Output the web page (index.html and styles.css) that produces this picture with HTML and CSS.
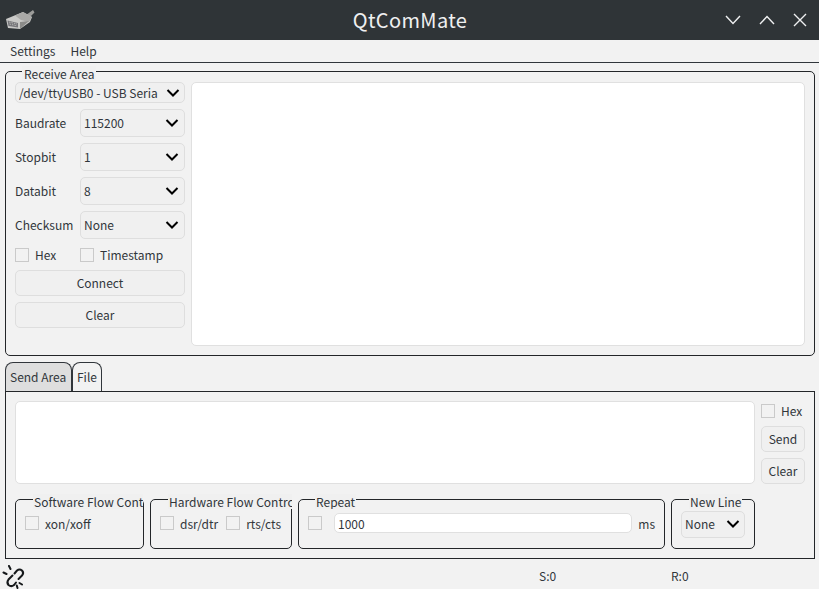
FILE: index.html
```html
<!DOCTYPE html>
<html lang="en">
<head>
<meta charset="utf-8">
<title>QtComMate</title>
<link rel="stylesheet" href="styles.css">
</head>
<body>
<div class="app">
  <header class="titlebar">
    <svg class="app-icon" width="32" height="24" viewBox="0 0 32 24">
      <path d="M21 7 L28 2 L29.5 4.5 L24 10 Z" fill="#9c9c9a"/>
      <path d="M1 11 L18 4 L27 9 L25 14 L15 21 L3 20 Z" fill="#c9c9c7"/>
      <path d="M10 7.5 L18 4 L27 9 L24 14 L16 12 Z" fill="#a9a9a7"/>
      <path d="M15 14 L24 13 L15 21 Z" fill="#8a8a88"/>
      <path d="M2.5 12.5 L13 15 L13 19.5 L3.5 18 Z" fill="#76767a"/>
      <path d="M4 14 L12 16 M4.5 16 L12 17.8" stroke="#b4b4b2" stroke-width="1" stroke-dasharray="1.5 1" fill="none"/>
    </svg>
    <div class="title">QtComMate</div>
    <div class="win-buttons">
      <svg width="16" height="10" viewBox="0 0 16 10"><path d="M1 1 L8 8.5 L15 1" class="win-stroke"/></svg>
      <svg width="16" height="10" viewBox="0 0 16 10"><path d="M1 9 L8 1.5 L15 9" class="win-stroke"/></svg>
      <svg width="14" height="14" viewBox="0 0 14 14"><path d="M1 1 L13 13 M13 1 L1 13" class="win-stroke"/></svg>
    </div>
  </header>

  <nav class="menubar"><span>Settings</span><span>Help</span></nav>

  <section class="group receive">
    <div class="legend receive-legend">Receive Area</div>
    <div class="side">
      <div class="combo port"><span class="clip">/dev/ttyUSB0 - USB Serial</span><svg class="chev" width="14" height="8" viewBox="0 0 14 8"><path d="M1.5 1 L7 6.5 L12.5 1"/></svg></div>
      <div class="field"><label>Baudrate</label><div class="combo"><span>115200</span><svg class="chev" width="14" height="8" viewBox="0 0 14 8"><path d="M1.5 1 L7 6.5 L12.5 1"/></svg></div></div>
      <div class="field"><label>Stopbit</label><div class="combo"><span>1</span><svg class="chev" width="14" height="8" viewBox="0 0 14 8"><path d="M1.5 1 L7 6.5 L12.5 1"/></svg></div></div>
      <div class="field"><label>Databit</label><div class="combo"><span>8</span><svg class="chev" width="14" height="8" viewBox="0 0 14 8"><path d="M1.5 1 L7 6.5 L12.5 1"/></svg></div></div>
      <div class="field"><label>Checksum</label><div class="combo"><span>None</span><svg class="chev" width="14" height="8" viewBox="0 0 14 8"><path d="M1.5 1 L7 6.5 L12.5 1"/></svg></div></div>
      <div class="check-row">
        <div class="check hex-check"><i class="box"></i>Hex</div>
        <div class="check"><i class="box"></i>Timestamp</div>
      </div>
      <div class="btn wide">Connect</div>
      <div class="btn wide">Clear</div>
    </div>
    <div class="textbox receive-text"></div>
  </section>

  <div class="tabs">
    <div class="tab active">Send Area</div>
    <div class="tab">File</div>
  </div>

  <section class="pane">
    <div class="send-top">
      <div class="textbox send-text"></div>
      <div class="send-side">
        <div class="check"><i class="box"></i>Hex</div>
        <div class="btn small">Send</div>
        <div class="btn small">Clear</div>
      </div>
    </div>
    <div class="options">
      <div class="group opt g-soft">
        <div class="legend soft-legend">Software Flow Cont</div>
        <div class="check"><i class="box"></i>xon/xoff</div>
      </div>
      <div class="group opt g-hard">
        <div class="legend hard-legend">Hardware Flow Contrc</div>
        <div class="check"><i class="box"></i>dsr/dtr</div>
        <div class="check"><i class="box"></i>rts/cts</div>
      </div>
      <div class="group opt g-repeat">
        <div class="legend repeat-legend">Repeat</div>
        <i class="box"></i>
        <div class="textbox repeat-input">1000</div>
        <span>ms</span>
      </div>
      <div class="group opt g-newline">
        <div class="legend newline-legend">New Line</div>
        <div class="combo newline-combo"><span>None</span><svg class="chev" width="14" height="8" viewBox="0 0 14 8"><path d="M1.5 1 L7 6.5 L12.5 1"/></svg></div>
      </div>
    </div>
  </section>

  <footer class="statusbar">
    <svg class="link-icon" width="24" height="24" viewBox="0 0 24 24">
      <path d="M12.5 8.5 L15 5.5 Q17.5 3.5 20 5.5 Q22.3 8 20 10.5 L16.5 14" class="link-stroke"/>
      <path d="M10.5 10.5 L6.5 14.5 Q4.3 17.5 6.5 20 Q9.3 22.3 12 20 L14 17.5" class="link-stroke"/>
      <path d="M7 1 L8.5 4 M1.5 7.5 L4.5 9 M20 19.5 L17.5 18 M15.5 23 L14.8 20.5" class="link-stroke"/>
    </svg>
    <span class="stat-s">S:0</span>
    <span class="stat-r">R:0</span>
  </footer>
</div>
</body>
</html>
```

FILE: styles.css
```css
* { box-sizing: border-box; }
html, body { margin: 0; padding: 0; }
body {
  width: 819px;
  height: 589px;
  overflow: hidden;
  background: #f2f2f2;
  color: #31363b;
  font: 12px/16px "Noto Sans CJK SC", "Noto Sans", sans-serif;
}
.app { display: flex; flex-direction: column; height: 589px; }

.titlebar {
  height: 40px;
  background: #2f3437;
  display: flex;
  align-items: center;
  position: relative;
  flex: none;
}
.app-icon { margin-left: 5px; margin-top: -1px; flex: none; }
.title {
  position: absolute;
  left: 1px; right: 0;
  text-align: center;
  color: #eff0f1;
  font-size: 20px;
  line-height: 40px;
  letter-spacing: 0.35px;
}
.win-buttons {
  margin-left: auto;
  margin-right: 12px;
  display: flex;
  align-items: center;
  gap: 18px;
  position: relative;
}
.win-buttons svg { display: block; }
.win-stroke { fill: none; stroke: #eff0f1; stroke-width: 1.4; }

.menubar {
  height: 23px;
  flex: none;
  display: flex;
  gap: 15px;
  padding: 3px 0 0 10px;
  border-bottom: 1px solid #31363b;
}

.group {
  position: relative;
  border: 1px solid #232629;
  border-radius: 5px;
}
.legend {
  position: absolute;
  background: #f0f0f0;
  line-height: 15px;
  white-space: nowrap;
  overflow: hidden;
}
.receive {
  height: 285px;
  margin: 8px 4px 0 5px;
  padding: 10px 9px 9px 9px;
  display: flex;
  gap: 6px;
  flex: none;
}
.receive-legend { left: 16px; top: -6px; padding: 0 1px 0 2px; }

.side { width: 170px; flex: none; display: flex; flex-direction: column; }
.combo {
  height: 28px;
  border: 1px solid #dedede;
  border-radius: 5px;
  background: #f0f0f0;
  display: flex;
  align-items: center;
  padding-left: 3px;
  padding-right: 5px;
  width: 105px;
  justify-content: space-between;
}
.chev { flex: none; }
.chev path { fill: none; stroke: #000; stroke-width: 2; }
.clip { overflow: hidden; white-space: nowrap; flex: 1; height: 15px; line-height: 15px; }
.combo.port { width: 170px; height: 21px; padding-left: 3px; padding-right: 4px; margin-bottom: 6px; }
.port .clip { max-width: 139px; margin-right: 8px; }
.field { display: flex; align-items: center; justify-content: space-between; margin-bottom: 6px; }

.check { display: flex; align-items: center; }
.box {
  display: block;
  width: 14px;
  height: 14px;
  border: 1px solid #cacaca;
  margin-right: 6px;
  flex: none;
}
.check-row { display: flex; height: 20px; align-items: center; margin-bottom: 5px; }
.hex-check { width: 65px; }
.btn {
  border: 1px solid #dedede;
  border-radius: 5px;
  background: #f0f0f0;
  display: flex;
  align-items: center;
  justify-content: center;
}
.btn.wide { height: 26px; margin-bottom: 6px; }
.btn.small { height: 26px; width: 44px; }

.textbox {
  background: #fff;
  border: 1px solid #e0e0e0;
  border-radius: 5px;
}
.receive-text { flex: 1; }

.tabs { display: flex; margin: 6px 0 0 5px; height: 29px; flex: none; }
.tab {
  border: 1px solid #31363b;
  border-bottom: 1px solid #232629;
  border-radius: 8px 8px 0 0;
  padding: 6px 4px 0 4px;
  height: 30px;
}
.tab.active { background: #dedede; width: 67px; }
.tab + .tab { margin-left: 0; width: 30px; padding-left: 4px; }

.pane {
  height: 168px;
  margin: 0 4px 0 5px;
  border: 1px solid #232629;
  padding: 9px;
  flex: none;
  position: relative;
}
.send-top { display: flex; gap: 6px; height: 83px; }
.send-text { flex: 1; }
.send-side { width: 44px; display: flex; flex-direction: column; gap: 6px; }
.send-side .check { height: 19px; }
.options { display: flex; gap: 6px; margin-top: 15px; }
.opt { height: 50px; display: flex; align-items: center; padding: 0 9px 0 9px; }
.g-soft { width: 129px; }
.g-hard { width: 142px; gap: 8px; }
.g-repeat { width: 367px; gap: 5px; }
.g-repeat .box { margin-right: 7px; }
.g-newline { width: 84px; justify-content: center; }
.opt .box, .opt > .textbox { position: relative; top: -1px; }
.soft-legend { left: 17px; top: -6px; width: 110px; padding-left: 1px; }
.hard-legend { left: 17px; top: -6px; width: 124px; padding-left: 1px; }
.repeat-legend { left: 16px; top: -6px; padding: 0 1px; }
.newline-legend { left: 17px; top: -6px; padding: 0 1px; }
.repeat-input { flex: 1; height: 20px; line-height: 20px; padding-left: 3px; margin-right: 1px; }
.newline-combo { width: 64px; height: 27px; padding: 0 4px 0 3px; }

.statusbar { flex: 1; display: flex; align-items: center; position: relative; }
.link-icon { margin: 5px 0 0 2px; flex: none; }
.link-stroke { fill: none; stroke: #16191b; stroke-width: 2; stroke-linecap: round; }
.stat-s { margin-left: 513px; margin-top: 4px; width: 132px; }
.stat-r { margin-top: 4px; }
```
